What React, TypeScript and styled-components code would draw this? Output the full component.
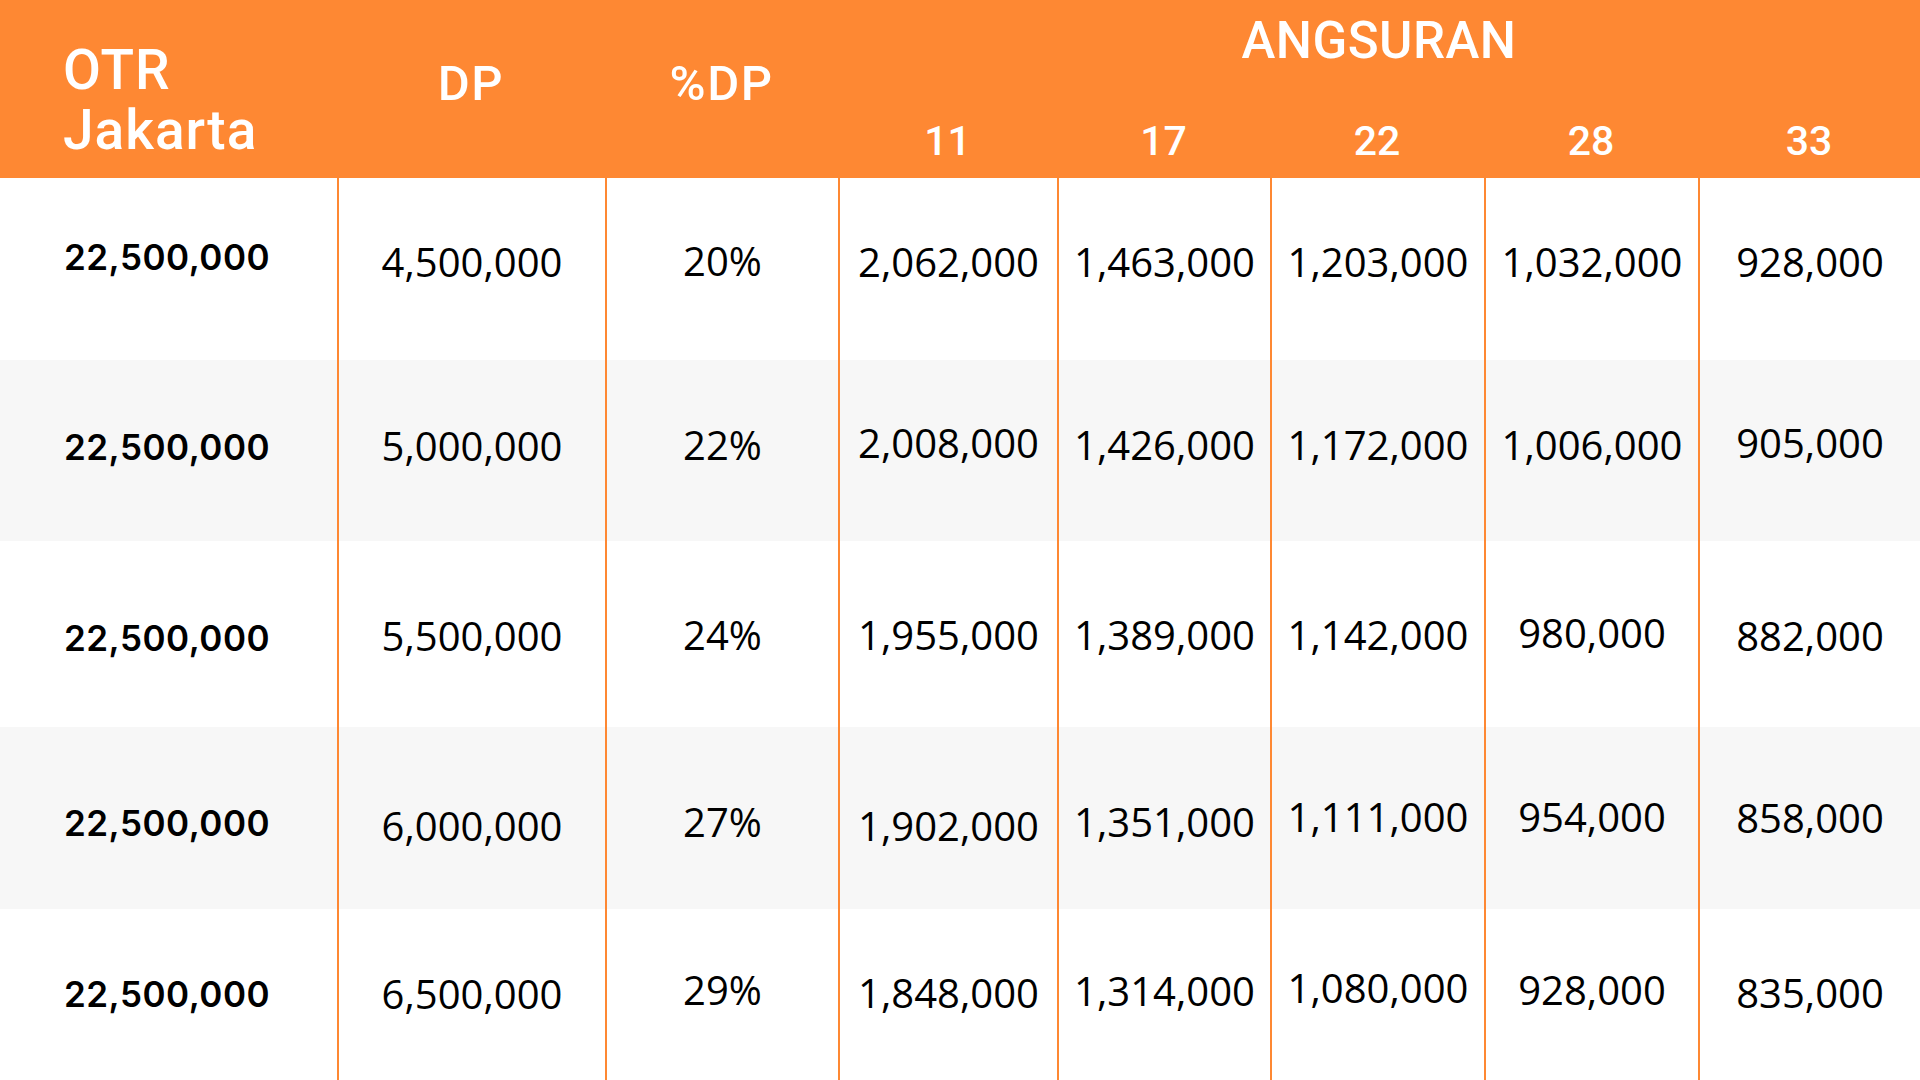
import React from "react";
import styled, { createGlobalStyle } from "styled-components";

const ORANGE = "#fe8833";
const STRIPE = "#f7f7f7";

const COLUMNS = "337px 268px 233px 219px 213px 214px 214px 222px";

type Cell = [string, number];

type Row = {
  otr: string;
  otrY: number;
  height: number;
  cells: Cell[];
};

const TENORS = ["11", "17", "22", "28", "33"];

const ROWS: Row[] = [
  {
    otr: "22,500,000",
    otrY: 79,
    height: 182,
    cells: [
      ["4,500,000", 85],
      ["20%", 83.5],
      ["2,062,000", 85],
      ["1,463,000", 85],
      ["1,203,000", 85],
      ["1,032,000", 85],
      ["928,000", 85],
    ],
  },
  {
    otr: "22,500,000",
    otrY: 87.5,
    height: 181,
    cells: [
      ["5,000,000", 86.5],
      ["22%", 86],
      ["2,008,000", 83.5],
      ["1,426,000", 86],
      ["1,172,000", 86],
      ["1,006,000", 86],
      ["905,000", 83.5],
    ],
  },
  {
    otr: "22,500,000",
    otrY: 97.5,
    height: 186,
    cells: [
      ["5,500,000", 96],
      ["24%", 95],
      ["1,955,000", 95],
      ["1,389,000", 95],
      ["1,142,000", 95],
      ["980,000", 92.5],
      ["882,000", 95.5],
    ],
  },
  {
    otr: "22,500,000",
    otrY: 96,
    height: 182,
    cells: [
      ["6,000,000", 100],
      ["27%", 95.5],
      ["1,902,000", 100],
      ["1,351,000", 95.5],
      ["1,111,000", 91],
      ["954,000", 91],
      ["858,000", 91.5],
    ],
  },
  {
    otr: "22,500,000",
    otrY: 85,
    height: 171,
    cells: [
      ["6,500,000", 86],
      ["29%", 82],
      ["1,848,000", 85],
      ["1,314,000", 82.5],
      ["1,080,000", 80],
      ["928,000", 82],
      ["835,000", 84.5],
    ],
  },
];

function App() {
  return (
    <>
      <GlobalStyle />
      <Page>
        <Header>
          <OtrTitle>
            OTR
            <br />
            Jakarta
          </OtrTitle>
          <ColumnTitle>DP</ColumnTitle>
          <ColumnTitle>%DP</ColumnTitle>
          <GroupTitle>ANGSURAN</GroupTitle>
          {TENORS.map((t) => (
            <Tenor key={t}>{t}</Tenor>
          ))}
        </Header>
        <Body>
          {ROWS.map((row, i) => (
            <TableRow key={i} $height={row.height} $striped={i % 2 === 1}>
              <OtrCell $capY={row.otrY}>{row.otr}</OtrCell>
              {row.cells.map(([value, capY], j) => (
                <ValueCell key={j} $capY={capY}>
                  {value}
                </ValueCell>
              ))}
            </TableRow>
          ))}
        </Body>
      </Page>
    </>
  );
}

const GlobalStyle = createGlobalStyle`
  html, body {
    margin: 0;
    padding: 0;
    background: #ffffff;
  }
  * {
    box-sizing: border-box;
  }
`;

const Page = styled.div`
  display: flex;
  flex-direction: column;
  width: 1920px;
  height: 1080px;
  overflow: hidden;
  background: #ffffff;
`;

const Header = styled.div`
  display: grid;
  grid-template-columns: ${COLUMNS};
  grid-template-rows: 100px 78px;
  height: 178px;
  background: ${ORANGE};
  color: #ffffff;
  font-family: Roboto, "Liberation Sans", sans-serif;
  font-weight: 500;
`;

const OtrTitle = styled.div`
  grid-row: 1 / 3;
  padding: 40px 0 0 63px;
  font-size: 55px;
  line-height: 60px;
  letter-spacing: 1px;
`;

const ColumnTitle = styled.div`
  grid-row: 1 / 3;
  padding-top: 59px;
  text-align: center;
  font-size: 49px;
  line-height: 49px;
  letter-spacing: 1.5px;
`;

const GroupTitle = styled.div`
  grid-column: 4 / 9;
  grid-row: 1;
  padding-top: 15px;
  text-align: center;
  font-size: 51px;
  line-height: 51px;
  letter-spacing: 0.5px;
`;

const Tenor = styled.div`
  grid-row: 2;
  padding-top: 21px;
  text-align: center;
  font-size: 41px;
  line-height: 41px;
`;

const Body = styled.div`
  display: flex;
  flex-direction: column;
  flex: 1;
  min-height: 0;
`;

const TableRow = styled.div<{ $height: number; $striped: boolean }>`
  display: grid;
  grid-template-columns: ${COLUMNS};
  flex: 0 0 ${(p) => p.$height}px;
  background: ${(p) => (p.$striped ? STRIPE : "#ffffff")};
`;

const OtrCell = styled.div<{ $capY: number }>`
  padding: ${(p) => p.$capY - 17.5}px 0 0 64px;
  font-family: Inter, "Open Sans", sans-serif;
  font-weight: 600;
  font-size: 35px;
  line-height: 35px;
  letter-spacing: 0.5px;
  color: #000000;
`;

const ValueCell = styled.div<{ $capY: number }>`
  padding-top: ${(p) => p.$capY - 21}px;
  border-left: 2px solid ${ORANGE};
  text-align: center;
  font-family: "Open Sans", "Liberation Sans", sans-serif;
  font-weight: 400;
  font-size: 40px;
  line-height: 40px;
  color: #000000;
`;

export default App;
